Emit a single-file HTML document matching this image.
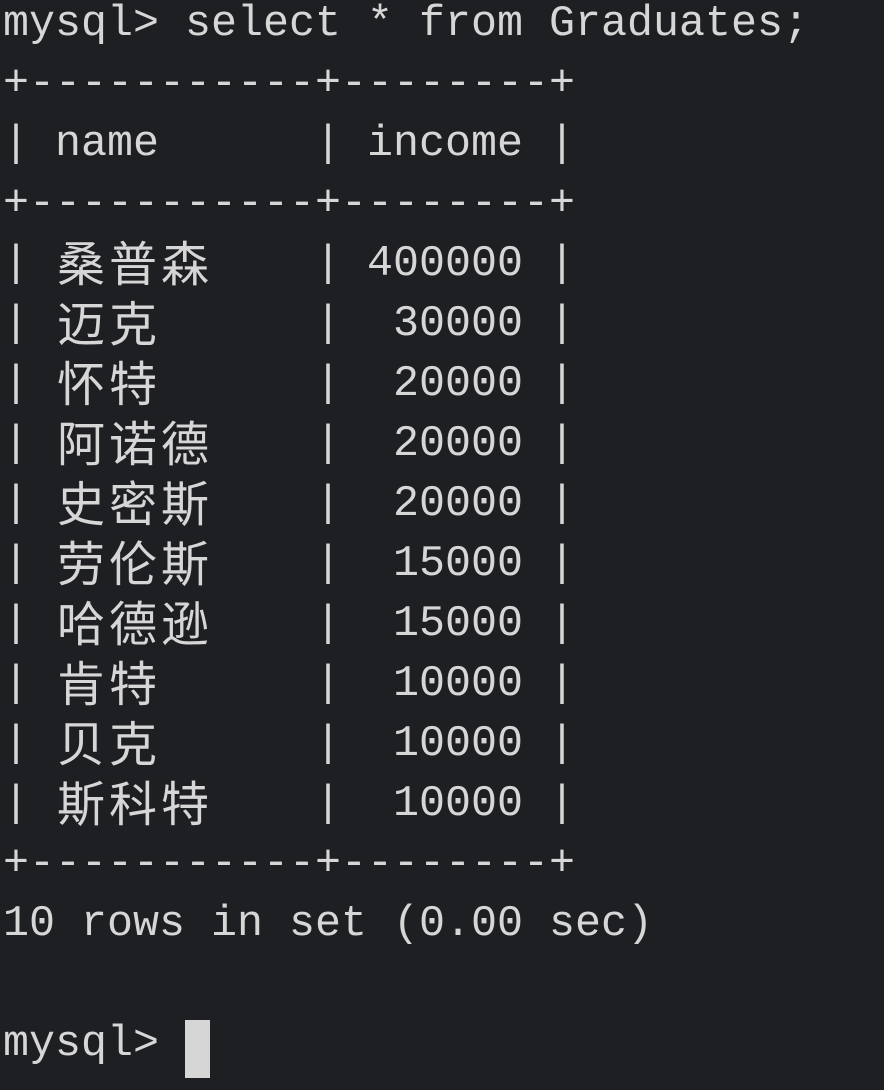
<!DOCTYPE html>
<html><head><meta charset="utf-8"><style>
html,body{margin:0;padding:0;background:#1e1f22;width:884px;height:1090px;overflow:hidden}
pre{margin:0;position:absolute;left:3px;top:-5px;font-family:"Liberation Mono","Noto Sans CJK SC",monospace;font-size:43.33px;line-height:60px;color:#d6d6d6}
.c{display:inline-block;width:52px;text-align:center;font-family:"Noto Sans CJK SC",sans-serif;font-size:48px;line-height:60px;height:60px;vertical-align:top;position:relative;top:-5px}
.cur{position:absolute;left:185px;top:1020px;width:25px;height:58px;background:#d6d6d6}
</style></head><body>
<pre>mysql&gt; select * from Graduates;
+-----------+--------+
| name      | income |
+-----------+--------+
| <span class="c">桑</span><span class="c">普</span><span class="c">森</span>    | 400000 |
| <span class="c">迈</span><span class="c">克</span>      |  30000 |
| <span class="c">怀</span><span class="c">特</span>      |  20000 |
| <span class="c">阿</span><span class="c">诺</span><span class="c">德</span>    |  20000 |
| <span class="c">史</span><span class="c">密</span><span class="c">斯</span>    |  20000 |
| <span class="c">劳</span><span class="c">伦</span><span class="c">斯</span>    |  15000 |
| <span class="c">哈</span><span class="c">德</span><span class="c">逊</span>    |  15000 |
| <span class="c">肯</span><span class="c">特</span>      |  10000 |
| <span class="c">贝</span><span class="c">克</span>      |  10000 |
| <span class="c">斯</span><span class="c">科</span><span class="c">特</span>    |  10000 |
+-----------+--------+
10 rows in set (0.00 sec)

mysql&gt; </pre>
<div class="cur"></div>
</body></html>
